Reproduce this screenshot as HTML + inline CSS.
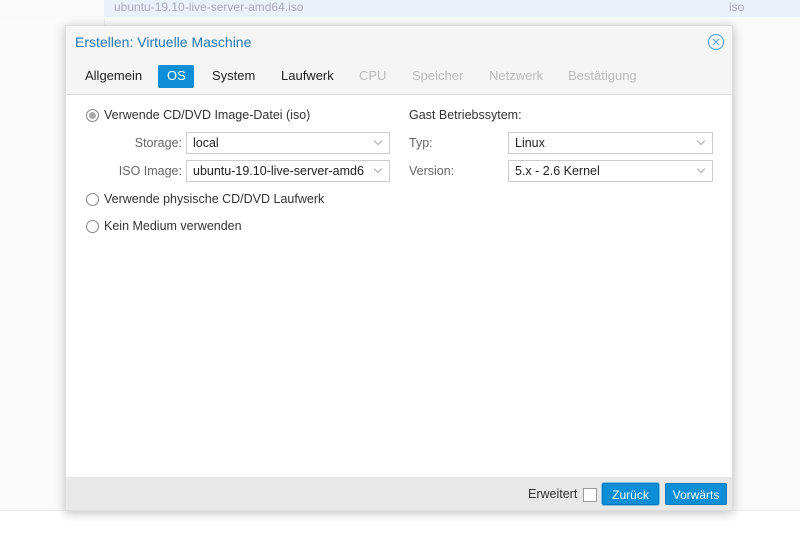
<!DOCTYPE html><html><head><style>
body{margin:0;width:800px;height:536px;background:#fafafa;font-family:"Liberation Sans",sans-serif;font-size:12.5px;color:#333;position:relative;overflow:hidden}
.abs{position:absolute}
.dlg{left:65px;top:25px;width:668px;height:486px;background:#f5f5f5;box-shadow:0 2px 10px rgba(0,0,0,.25);border:1px solid #ddd;box-sizing:border-box}
.tab{top:68px;font-size:13px;color:#222}
.dis{color:#bbb}
.inp{height:22px;border:1px solid #ccc;background:#fff;box-sizing:border-box;padding:3px 6px;font-size:12.5px;color:#222}
.inp:after{content:"";position:absolute;right:8px;top:5px;width:5px;height:5px;border-right:1px solid #aaa;border-bottom:1px solid #aaa;transform:rotate(45deg)}
.lab{color:#666;text-align:right}
.rad{width:11px;height:11px;border:1px solid #888;border-radius:50%;background:#fff}
.btn{top:483px;height:22px;background:#0e8ed6;color:#fff;font-size:12px;text-align:center;line-height:22px;border-radius:2px;border:1px solid #0a78b8;box-sizing:border-box}
</style></head><body>
<div class="abs" style="left:104px;top:0;width:696px;height:17px;background:#e9f1fa"></div>
<div class="abs" style="left:114px;top:0;color:#aab;font-size:12px">ubuntu-19.10-live-server-amd64.iso</div>
<div class="abs" style="left:729px;top:0;color:#aab;font-size:12px">iso</div>
<div class="abs" style="left:0;top:18px;width:104px;height:490px;background:#fbfbfb;border-right:1px solid #eee"></div>
<div class="abs" style="left:0;top:510px;width:800px;height:26px;background:#fff;border-top:1px solid #eee"></div>
<div class="abs dlg"></div>
<div class="abs" style="left:75px;top:34px;font-size:14px;color:#2278b5">Erstellen: Virtuelle Maschine</div>
<svg class="abs" style="left:707px;top:33px" width="18" height="18"><circle cx="9" cy="9" r="7.5" fill="none" stroke="#5fa6d8" stroke-width="1.2"/><path d="M6 6L12 12M12 6L6 12" stroke="#5fa6d8" stroke-width="1.2"/></svg>
<div class="abs tab" style="left:85px">Allgemein</div>
<div class="abs" style="left:158px;top:65px;width:36px;height:23px;background:#0e8ed6;border-radius:2px"></div>
<div class="abs tab" style="left:167px;color:#fff">OS</div>
<div class="abs tab" style="left:212px">System</div>
<div class="abs tab" style="left:281px">Laufwerk</div>
<div class="abs tab dis" style="left:359px">CPU</div>
<div class="abs tab dis" style="left:412px">Speicher</div>
<div class="abs tab dis" style="left:489px">Netzwerk</div>
<div class="abs tab dis" style="left:568px">Bestätigung</div>
<div class="abs" style="left:66px;top:94px;width:666px;height:382px;background:#fff;border-top:1px solid #ddd;border-bottom:1px solid #ddd"></div>
<div class="abs rad" style="left:86px;top:109px;background:#aaa;box-shadow:inset 0 0 0 2px #fff"></div>
<div class="abs" style="left:104px;top:108px">Verwende CD/DVD Image-Datei (iso)</div>
<div class="abs lab" style="left:100px;top:136px;width:82px">Storage:</div>
<div class="abs inp" style="left:186px;top:132px;width:204px">local</div>
<div class="abs lab" style="left:100px;top:164px;width:82px">ISO Image:</div>
<div class="abs inp" style="left:186px;top:160px;width:204px">ubuntu-19.10-live-server-amd6</div>
<div class="abs rad" style="left:86px;top:193px"></div>
<div class="abs" style="left:104px;top:192px">Verwende physische CD/DVD Laufwerk</div>
<div class="abs rad" style="left:86px;top:220px"></div>
<div class="abs" style="left:104px;top:219px">Kein Medium verwenden</div>
<div class="abs" style="left:409px;top:108px">Gast Betriebssytem:</div>
<div class="abs lab" style="left:409px;top:136px;text-align:left">Typ:</div>
<div class="abs inp" style="left:508px;top:132px;width:205px">Linux</div>
<div class="abs lab" style="left:409px;top:164px;text-align:left">Version:</div>
<div class="abs inp" style="left:508px;top:160px;width:205px">5.x - 2.6 Kernel</div>
<div class="abs" style="left:66px;top:477px;width:666px;height:33px;background:#e8e8e8"></div>
<div class="abs" style="left:528px;top:487px">Erweitert</div>
<div class="abs" style="left:583px;top:488px;width:12px;height:12px;border:1px solid #999;background:#fff"></div>
<div class="abs btn" style="left:602px;width:57px;box-shadow:0 0 0 1px #7fc2ea">Zurück</div>
<div class="abs btn" style="left:665px;width:62px">Vorwärts</div>
</body></html>
